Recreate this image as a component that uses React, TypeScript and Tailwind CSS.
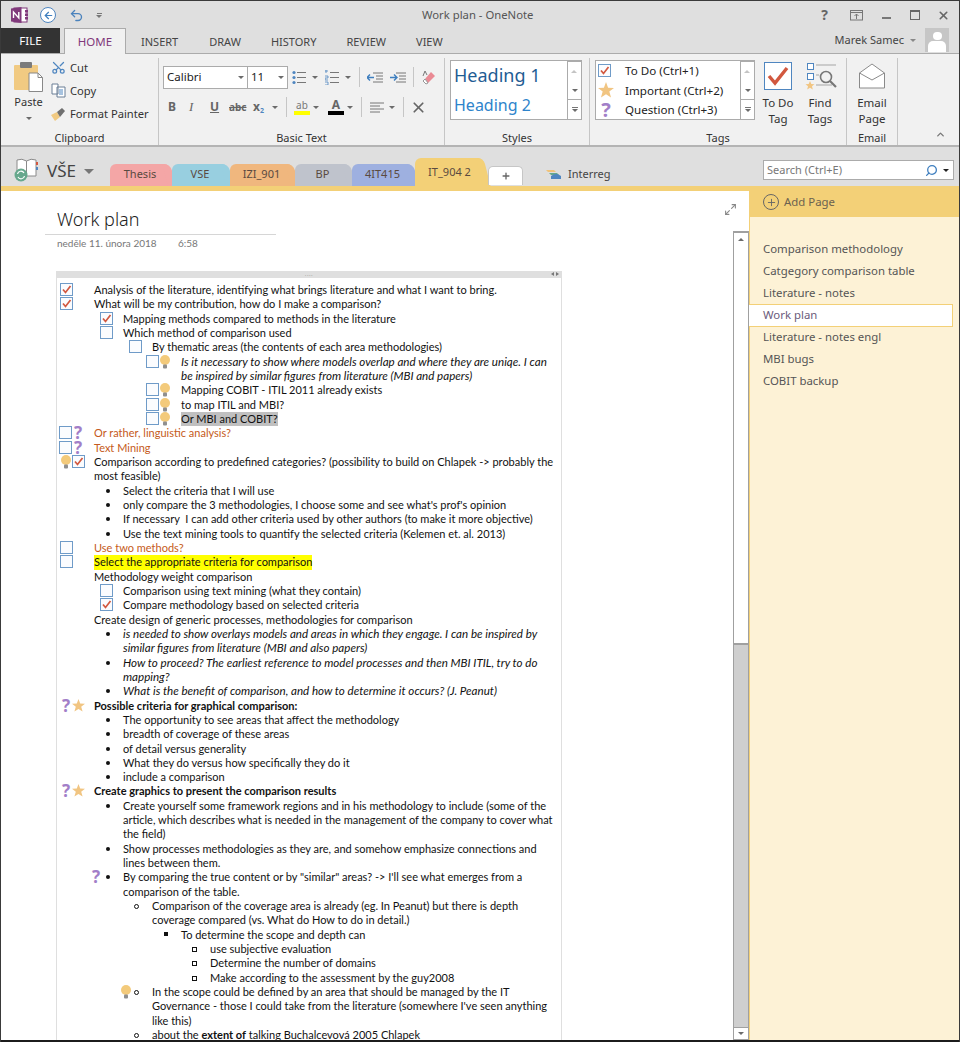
import React from "react";
import { Scissors, Undo2, ArrowLeft, Plus, Search, X, ChevronUp, Maximize2 } from "lucide-react";

const ui = "font-['Noto_Sans','Open_Sans',sans-serif]";
const cal = "font-['Lato','Noto_Sans',sans-serif]";

function Box({ on }: { on?: boolean }) {
  return (
    <svg width="13" height="13" viewBox="0 0 13 13" className="shrink-0">
      <rect x="0.5" y="0.5" width="12" height="12" fill="#fbfcfe" stroke="#6f9bc8" />
      {on && <path d="M3 6.5 L5.5 9.5 L10.5 3" fill="none" stroke="#d2583f" strokeWidth="1.7" />}
    </svg>
  );
}
function Bulb() {
  return (
    <svg width="10" height="14" viewBox="0 0 10 14" className="shrink-0">
      <circle cx="5" cy="5" r="5" fill="#f3ca7b" />
      <rect x="3" y="9.5" width="4" height="4" rx="1" fill="#8f8f8f" />
    </svg>
  );
}
function Q({ big }: { big?: boolean }) {
  return <span className={`shrink-0 w-[10px] h-[14px] text-center font-['Noto_Sans',sans-serif] font-bold ${big ? "text-[20px]" : "text-[17px]"} leading-[14px] text-[#a27fc8]`}>?</span>;
}
function Star({ s = 13, c = "#f1c582" }: { s?: number; c?: string }) {
  return (
    <svg width={s} height={s} viewBox="0 0 13 13" className="shrink-0">
      <path d="M6.5 0 L8.2 4.6 L13 4.8 L9.2 7.8 L10.6 12.6 L6.5 9.9 L2.4 12.6 L3.8 7.8 L0 4.8 L4.8 4.6 Z" fill={c} />
    </svg>
  );
}
const Dot = () => <span className="shrink-0 mt-[5px] size-[4px] rounded-full bg-[#111]" />;
const Ring = () => <span className="shrink-0 mt-[5px] size-[5px] rounded-full border border-[#111]" />;
const Sq = () => <span className="shrink-0 mt-[4px] size-[4px] bg-[#111]" />;
const Hollow = () => <span className="shrink-0 mt-[5px] size-[5px] border border-[#111]" />;

type RowP = { g: string; pad: string; icons?: React.ReactNode; children: React.ReactNode; cls?: string };
function Row({ g, pad, icons, children, cls = "" }: RowP) {
  return (
    <div className="flex items-start">
      <div className={`flex shrink-0 justify-end items-start gap-[1px] h-[14px] ${g} ${pad}`}>{icons}</div>
      <div className={`whitespace-pre ${cls}`}>{children}</div>
    </div>
  );
}
const L0 = "w-[36px]", L1 = "w-[65px]", L2 = "w-[94px]", L3 = "w-[123px]", L4 = "w-[152px]";
const orange = "text-[#c55a20]";
const ital = "italic text-[11.6px]";

function B1({ children, cls }: { children: React.ReactNode; cls?: string }) {
  return <Row g={L1} pad="pr-[13px]" icons={<Dot />} cls={cls}>{children}</Row>;
}

function Outline() {
  return (
    <div className={`${cal} text-[11px] leading-[14.33px] text-[#111] pt-[5px] pl-[1px]`}>
      <Row g={L0} pad="pr-[21px]" icons={<Box on />}>Analysis of the literature, identifying what brings literature and what I want to bring.</Row>
      <Row g={L0} pad="pr-[21px]" icons={<Box on />}>What will be my contribution, how do I make a comparison?</Row>
      <Row g={L1} pad="pr-[10px]" icons={<Box on />}>Mapping methods compared to methods in the literature</Row>
      <Row g={L1} pad="pr-[10px]" icons={<Box />}>Which method of comparison used</Row>
      <Row g={L2} pad="pr-[10px]" icons={<Box />}>By thematic areas (the contents of each area methodologies)</Row>
      <Row g={L3} pad="pr-[11px]" icons={<><Box /><Bulb /></>} cls={ital}>{"Is it necessary to show where models overlap and where they are uniqe. I can\nbe inspired by similar figures from literature (MBI and papers)"}</Row>
      <Row g={L3} pad="pr-[11px]" icons={<><Box /><Bulb /></>}>Mapping COBIT - ITIL 2011 already exists</Row>
      <Row g={L3} pad="pr-[11px]" icons={<><Box /><Bulb /></>}>to map ITIL and MBI?</Row>
      <Row g={L3} pad="pr-[11px]" icons={<><Box /><Bulb /></>}><span className="inline-block bg-[#c0c0c0]">Or MBI and COBIT?</span></Row>
      <Row g={L0} pad="pr-[11px]" icons={<><Box /><Q /></>} cls={orange}>Or rather, linguistic analysis?</Row>
      <Row g={L0} pad="pr-[11px]" icons={<><Box /><Q /></>} cls={orange}>Text Mining</Row>
      <Row g={L0} pad="pr-[9px]" icons={<><Bulb /><Box on /></>}>{"Comparison according to predefined categories? (possibility to build on Chlapek -> probably the\nmost feasible)"}</Row>
      <B1>Select the criteria that I will use</B1>
      <B1>only compare the 3 methodologies, I choose some and see what's prof's opinion</B1>
      <B1>If necessary  I can add other criteria used by other authors (to make it more objective)</B1>
      <B1>Use the text mining tools to quantify the selected criteria (Kelemen et. al. 2013)</B1>
      <Row g={L0} pad="pr-[21px]" icons={<Box />} cls={orange}>Use two methods?</Row>
      <Row g={L0} pad="pr-[21px]" icons={<Box />}><span className="inline-block bg-[#ffff00]">Select the appropriate criteria for comparison</span></Row>
      <Row g={L0} pad="">Methodology weight comparison</Row>
      <Row g={L1} pad="pr-[10px]" icons={<Box />}>Comparison using text mining (what they contain)</Row>
      <Row g={L1} pad="pr-[10px]" icons={<Box on />}>Compare methodology based on selected criteria</Row>
      <Row g={L0} pad="">Create design of generic processes, methodologies for comparison</Row>
      <B1 cls={ital}>{"is needed to show overlays models and areas in which they engage. I can be inspired by\nsimilar figures from literature (MBI and also papers)"}</B1>
      <B1 cls={ital}>{"How to proceed? The earliest reference to model processes and then MBI ITIL, try to do\nmapping?"}</B1>
      <B1 cls={ital}>What is the benefit of comparison, and how to determine it occurs? (J. Peanut)</B1>
      <Row g={L0} pad="pr-[9px]" icons={<><Q /><Star /></>} cls="font-bold">Possible criteria for graphical comparison:</Row>
      <B1>The opportunity to see areas that affect the methodology</B1>
      <B1>breadth of coverage of these areas</B1>
      <B1>of detail versus generality</B1>
      <B1>What they do versus how specifically they do it</B1>
      <B1>include a comparison</B1>
      <Row g={L0} pad="pr-[9px]" icons={<><Q /><Star /></>} cls="font-bold">Create graphics to present the comparison results</Row>
      <B1>{"Create yourself some framework regions and in his methodology to include (some of the\narticle, which describes what is needed in the management of the company to cover what\nthe field)"}</B1>
      <B1>{"Show processes methodologies as they are, and somehow emphasize connections and\nlines between them."}</B1>
      <Row g={L1} pad="pr-[13px]" icons={<span className="flex gap-[5px]"><Q /><Dot /></span>}>{"By comparing the true content or by \"similar\" areas? -> I'll see what emerges from a\ncomparison of the table."}</Row>
      <Row g={L2} pad="pr-[13px]" icons={<Ring />}>{"Comparison of the coverage area is already (eg. In Peanut) but there is depth\ncoverage compared (vs. What do How to do in detail.)"}</Row>
      <Row g={L3} pad="pr-[13px]" icons={<Sq />}>To determine the scope and depth can</Row>
      <Row g={L4} pad="pr-[13px]" icons={<Hollow />}>use subjective evaluation</Row>
      <Row g={L4} pad="pr-[13px]" icons={<Hollow />}>Determine the number of domains</Row>
      <Row g={L4} pad="pr-[13px]" icons={<Hollow />}>Make according to the assessment by the guy2008</Row>
      <Row g={L2} pad="pr-[13px]" icons={<span className="flex gap-[3px]"><Bulb /><Ring /></span>}>{"In the scope could be defined by an area that should be managed by the IT\nGovernance - those I could take from the literature (somewhere I've seen anything\nlike this)"}</Row>
      <Row g={L2} pad="pr-[13px]" icons={<Ring />}>about the <b>extent of</b> talking Buchalcevová 2005 Chlapek</Row>
    </div>
  );
}

function Caret({ c = "#6b6b6b" }: { c?: string }) {
  return <span className="inline-block size-0 border-x-[3px] border-t-[3px] border-x-transparent" style={{ borderTopColor: c }} />;
}

function NoteLogo() {
  return (
    <svg width="18" height="16" viewBox="0 0 18 16">
      <rect x="3" y="1" width="13" height="14" fill="#fff" stroke="#80397b" />
      <rect x="14" y="3" width="3" height="2.5" fill="#80397b" />
      <rect x="14" y="6.5" width="3" height="2.5" fill="#80397b" />
      <rect x="14" y="10" width="3" height="2.5" fill="#80397b" />
      <path d="M0 1.5 L10.5 0 V16 L0 14.5 Z" fill="#80397b" />
      <path d="M2.5 11 V5 L7.8 11 V5" stroke="#fff" strokeWidth="1.4" fill="none" />
    </svg>
  );
}

function TitleBar() {
  return (
    <div className="h-[27px] flex items-center shrink-0 pt-[1px]">
      <div className="ml-[10px]"><NoteLogo /></div>
      <div className="ml-[11px] size-[16px] rounded-full border border-[#4f86c0] bg-white flex items-center justify-center">
        <ArrowLeft size={11} strokeWidth={2.6} color="#3f7fbf" />
      </div>
      <Undo2 size={15} strokeWidth={2.2} color="#4b83bd" className="ml-[13px]" />
      <div className="ml-[12px] flex flex-col gap-[1px] items-center">
        <span className="w-[5px] h-[1px] bg-[#777]" />
        <Caret c="#777" />
      </div>
      <div className="ml-[320px] text-[11.3px] text-[#555] whitespace-pre">Work plan - OneNote</div>
      <div className="ml-auto flex items-center text-[#666] mr-[8px]">
        <span className="font-bold text-[14px] leading-none mr-[22px] text-[#666]">?</span>
        <svg width="14" height="11" viewBox="0 0 14 11" className="mr-[18px]"><rect x="0.5" y="0.5" width="12" height="9.5" fill="none" stroke="#777" /><path d="M0.5 2.5 H12.5 M6.5 9 V4 M4.5 6 L6.5 4 L8.5 6" stroke="#777" fill="none" /></svg>
        <span className="w-[9px] h-[2px] bg-[#777] mr-[19px] mt-[5px]" />
        <span className="w-[10px] h-[10px] border border-[#666] border-t-2 mr-[17px]" />
        <X size={13} strokeWidth={3} color="#666" className="mr-[1px]" />
      </div>
    </div>
  );
}

function TabsRow() {
  const t = "text-[11px] text-[#444] whitespace-nowrap";
  return (
    <div className="h-[26px] shrink-0 flex items-stretch border-b border-[#ababab]">
      <div className="w-[59px] h-[25px] pt-[1px] bg-[#333] text-white text-[11.5px] flex items-center justify-center">FILE</div>
      <div className="ml-[4px] w-[62px] h-[26px] pt-[1px] -mb-[1px] bg-[#f1f1f1] border border-b-0 border-[#ababab] text-[11.5px] text-[#80397b] flex items-center justify-center">HOME</div>
      <div className={`${t} ml-[15px] mt-[6px]`}>INSERT</div>
      <div className={`${t} ml-[31px] mt-[6px]`}>DRAW</div>
      <div className={`${t} ml-[30px] mt-[6px]`}>HISTORY</div>
      <div className={`${t} ml-[30px] mt-[6px]`}>REVIEW</div>
      <div className={`${t} ml-[30px] mt-[6px]`}>VIEW</div>
      <div className="ml-auto flex items-start mr-[10px]">
        <span className="text-[11px] text-[#444] mt-[4px] mr-[6px]">Marek Samec</span>
        <span className="mt-[11px] mr-[9px] flex"><Caret c="#888" /></span>
        <div className="w-[24px] h-[24px] bg-[#c6c6c6] overflow-hidden flex flex-col items-center pt-[4px]">
          <span className="size-[9px] rounded-full bg-white" />
          <span className="w-[18px] h-[12px] rounded-t-[5px] bg-white mt-[1px]" />
        </div>
      </div>
    </div>
  );
}

function Group({ w, label, children }: { w: string; label: string; children: React.ReactNode }) {
  return (
    <div className={`${w} h-[87px] shrink-0 flex flex-col border-r border-[#c6c6c6]`}>
      <div className="flex-1 min-h-0">{children}</div>
      <div className="h-[14px] text-[11px] leading-[14px] text-[#333] text-center">{label}</div>
    </div>
  );
}

function Small({ children }: { children: React.ReactNode }) {
  return <div className="text-[11.2px] leading-[23px] text-[#333] h-[23px] flex items-center gap-[4px] whitespace-nowrap">{children}</div>;
}
const Sep = () => <span className="w-[1px] h-[20px] bg-[#c6c6c6]" />;

function Ribbon() {
  return (
    <div className="h-[93px] shrink-0 bg-[#f1f1f1] border-b-2 border-[#b4b4b4] flex pt-[4px] pl-0 text-[#333]">
      <Group w="w-[158px]" label="Clipboard">
        <div className="flex pl-[13px] pt-[4px]">
          <div className="w-[29px] flex flex-col items-center">
            <svg width="29" height="30" viewBox="0 0 29 30">
              <rect x="0" y="3" width="24" height="25" rx="1" fill="#f1ca82" />
              <rect x="6" y="0" width="12" height="6" rx="1" fill="#7b7b7b" />
              <path d="M15 11 H24 L28.5 15.5 V29.5 H15 Z" fill="#fff" stroke="#888" />
              <path d="M24 11 V15.5 H28.5" fill="none" stroke="#888" />
            </svg>
            <span className="text-[11px] leading-[16px] mt-[2px]">Paste</span>
            <span className="mt-[7px] flex"><Caret /></span>
          </div>
          <div className="ml-[8px] -mt-[6px]">
            <Small><Scissors size={15} color="#4f86c0" className="-rotate-90" /> <span>Cut</span></Small>
            <Small>
              <svg width="15" height="15" viewBox="0 0 15 15"><path d="M1 1 H7 V11 H1 Z M6 4 H14 V14 H6 Z" fill="#fff" stroke="#6a7f96" /><path d="M8 7 H12 M8 9 H12 M8 11 H12" stroke="#4f86c0" /></svg>
              <span>Copy</span>
            </Small>
            <Small>
              <svg width="15" height="14" viewBox="0 0 15 14"><path d="M0 8 L6 5 L9 10 L4 14 Z" fill="#f1ca82" /><path d="M6 5 L11 1 L14 4 L9 10 Z" fill="#6f6f6f" /></svg>
              <span>Format Painter</span>
            </Small>
          </div>
        </div>
      </Group>
      <Group w="w-[286px]" label="Basic Text">
        <div className="pl-[4px] pt-[7px]">
          <div className="flex items-center h-[24px]">
            <div className="w-[85px] h-[23px] bg-white border border-[#ababab] flex items-center justify-between px-[3px] text-[11.5px] text-[#222]">Calibri<Caret /></div>
            <div className="w-[40px] h-[23px] bg-white border border-l-0 border-[#ababab] flex items-center justify-between px-[3px] text-[11.5px] text-[#222]">11<Caret /></div>
            <div className="ml-[4px] flex items-center">
              <svg width="15" height="15" viewBox="0 0 15 15"><circle cx="2" cy="2.5" r="1.6" fill="#4f86c0" /><circle cx="2" cy="7.5" r="1.6" fill="#4f86c0" /><circle cx="2" cy="12.5" r="1.6" fill="#4f86c0" /><path d="M5 2.5 H14 M5 7.5 H14 M5 12.5 H14" stroke="#777" /></svg>
              <span className="ml-[5px] flex"><Caret /></span>
              <svg width="15" height="15" viewBox="0 0 15 15" className="ml-[7px]"><path d="M0 1 H3 M1 0 V3 M0 6 H3 V8 H0 V10 H3 M0 12 H3 V15 H0" stroke="#4f86c0" fill="none" strokeWidth="0.8" /><path d="M5 2.5 H14 M5 7.5 H14 M5 12.5 H14" stroke="#777" /></svg>
              <span className="ml-[5px] mr-[8px] flex"><Caret /></span>
              <Sep />
              <svg width="16" height="11" viewBox="0 0 16 11" className="ml-[7px]"><path d="M6 1 H16 M9 4 H16 M9 7 H16 M6 10 H16" stroke="#777" /><path d="M0 5.5 H7 M3 2.5 L0 5.5 L3 8.5" stroke="#3f7fbf" strokeWidth="1.4" fill="none" /></svg>
              <svg width="16" height="11" viewBox="0 0 16 11" className="ml-[7px]"><path d="M6 1 H16 M9 4 H16 M9 7 H16 M6 10 H16" stroke="#777" /><path d="M0 5.5 H7 M4 2.5 L7 5.5 L4 8.5" stroke="#3f7fbf" strokeWidth="1.4" fill="none" /></svg>
              <span className="ml-[7px] flex"><Sep /></span>
              <svg width="15" height="15" viewBox="0 0 15 15" className="ml-[8px]"><path d="M6 13 L13 6 L9 2 L3 9 Z" fill="#ea8a94" /><path d="M3 9 L6 13 L4 14 L1 11 Z" fill="#fff" stroke="#999" /><path d="M3 1 L1 6 M3 1 L5 5" stroke="#777" fill="none" /></svg>
            </div>
          </div>
          <div className="flex items-center h-[26px] mt-[5px] pl-[5px] text-[#666]">
            <span className="font-bold text-[12px] w-[21px]">B</span>
            <span className="italic text-[13px] w-[21px] font-['Liberation_Serif',serif]">I</span>
            <span className="underline text-[12px] font-bold w-[19px]">U</span>
            <span className="line-through text-[10px] font-bold w-[24px]">abc</span>
            <span className="font-bold text-[12px] w-[19px] whitespace-nowrap">x<sub className="text-[7px] text-[#4f86c0]">2</sub></span>
            <span className="flex mr-[8px]"><Caret /></span>
            <Sep />
            <div className="ml-[7px] w-[16px] flex flex-col items-center">
              <span className="text-[10px] leading-[10px] text-[#777]">ab</span>
              <span className="w-[16px] h-[4px] bg-[#ffff00] mt-[1px]" />
            </div>
            <span className="ml-[3px] mr-[9px] flex"><Caret /></span>
            <div className="w-[16px] flex flex-col items-center">
              <span className="text-[12px] leading-[10px] font-bold text-[#666]">A</span>
              <span className="w-[16px] h-[4px] bg-black mt-[1px]" />
            </div>
            <span className="ml-[3px] mr-[8px] flex"><Caret /></span>
            <Sep />
            <svg width="14" height="11" viewBox="0 0 14 11" className="ml-[8px]"><path d="M0 1 H14 M0 4 H10 M0 7 H14 M0 10 H10" stroke="#777" /></svg>
            <span className="ml-[5px] mr-[8px] flex"><Caret /></span>
            <Sep />
            <X size={17} strokeWidth={2.4} color="#666" className="ml-[6px]" />
          </div>
        </div>
      </Group>
      <Group w="w-[145px]" label="Styles">
        <div className="ml-[5px] mt-[2px] w-[132px] h-[60px] bg-white border border-[#ababab] flex">
          <div className="flex-1 pl-[3px] whitespace-nowrap">
            <div className="text-[18px] leading-[28px] text-[#1f5d94]">Heading 1</div>
            <div className="text-[16px] leading-[28px] mt-[2px] text-[#2e84cb]">Heading 2</div>
          </div>
          <div className="w-[14px] border-l border-[#ababab] flex flex-col text-[#777]">
            <div className="h-[20px] flex items-center justify-center border-b border-[#ababab] rotate-180"><Caret c="#c4c4c4" /></div>
            <div className="h-[19px] flex items-center justify-center border-b border-[#ababab]"><Caret /></div>
            <div className="flex-1 flex flex-col gap-[1px] items-center justify-center"><span className="w-[6px] h-[1px] bg-[#777]" /><Caret /></div>
          </div>
        </div>
      </Group>
      <Group w="w-[257px]" label="Tags">
        <div className="flex ml-[5px] mt-[2px]">
          <div className="w-[160px] h-[60px] bg-white border border-[#ababab] flex">
            <div className="flex-1 text-[11.6px] leading-[19px] text-[#222] whitespace-nowrap">
              <div className="flex items-center h-[19px] pl-[2px]"><span className="w-[27px] flex"><Box on /></span>To Do (Ctrl+1)</div>
              <div className="flex items-center h-[20px] pl-[2px]"><span className="w-[27px] flex"><Star s={16} /></span>Important (Ctrl+2)</div>
              <div className="flex items-center h-[19px] pl-[2px]"><span className="w-[27px] flex pl-[3px]"><Q big /></span>Question (Ctrl+3)</div>
            </div>
            <div className="w-[14px] border-l border-[#ababab] flex flex-col">
              <div className="h-[20px] flex items-center justify-center border-b border-[#ababab] rotate-180"><Caret c="#c4c4c4" /></div>
              <div className="h-[19px] flex items-center justify-center border-b border-[#ababab]"><Caret /></div>
              <div className="flex-1 flex flex-col gap-[1px] items-center justify-center"><span className="w-[6px] h-[1px] bg-[#777]" /><Caret /></div>
            </div>
          </div>
          <div className="w-[42px] ml-[2px] pt-[2px] flex flex-col items-center text-[11.5px] leading-[16px]">
            <svg width="28" height="28" viewBox="0 0 28 28"><rect x="0.5" y="0.5" width="27" height="27" fill="#fff" stroke="#4f86c0" /><path d="M5 14 L11 21 L23 6" fill="none" stroke="#d2583f" strokeWidth="3.4" /></svg>
            <span className="text-center mt-[5px]">To Do<br />Tag</span>
          </div>
          <div className="w-[42px] pt-[2px] flex flex-col items-center text-[11.5px] leading-[16px]">
            <svg width="32" height="28" viewBox="0 0 32 28" className="ml-[1px]"><rect x="2.5" y="1.5" width="6" height="6" fill="#fff" stroke="#4f86c0" /><rect x="2.5" y="11.5" width="6" height="6" fill="#fff" stroke="#4f86c0" /><path d="M11 3 H31 M11 13 H14 M11 23 H27" stroke="#a5a5a5" /><path d="M5 19 L6.3 22 L9.5 22.2 L7 24.2 L7.8 27.5 L5 25.7 L2.2 27.5 L3 24.2 L0.5 22.2 L3.7 22 Z" fill="#f1c582" /><circle cx="21" cy="15" r="5.5" fill="none" stroke="#777" strokeWidth="1.6" /><path d="M25 19 L31 25" stroke="#777" strokeWidth="2.2" /></svg>
            <span className="text-center mt-[5px]">Find<br />Tags</span>
          </div>
        </div>
      </Group>
      <Group w="w-[51px]" label="Email">
        <div className="flex flex-col items-center mt-[5px] text-[11.5px] leading-[16px]">
          <svg width="26" height="26" viewBox="0 0 26 26"><path d="M0.5 10 L13 1 L25.5 10 V25 H0.5 Z" fill="#fff" stroke="#8a8a8a" /><path d="M0.5 10 L13 17 L25.5 10" fill="none" stroke="#8a8a8a" /></svg>
          <span className="text-center mt-[6px]">Email<br />Page</span>
        </div>
      </Group>
      <div className="flex-1 flex justify-end items-end pr-[13px] pb-[5px]"><ChevronUp size={11} strokeWidth={3} color="#777" /></div>
    </div>
  );
}

function NbTab({ label, bg, cls = "" }: { label: string; bg: string; cls?: string }) {
  return (
    <div className={`relative rounded-tl-[6px] rounded-tr-[6px] ${bg} text-[11px] text-[#5a4a40] flex items-center justify-center mr-[2px] after:absolute after:top-0 after:-right-[3px] after:bottom-0 after:w-[8px] after:bg-inherit after:rounded-tr-[6px] after:skew-x-[14deg] ${cls}`}>
      <span className="relative z-10">{label}</span>
    </div>
  );
}

function NotebookBar() {
  return (
    <div className="h-[39px] shrink-0 bg-[#dfdfdf] flex items-end relative">
      <div className="absolute right-[5px] top-[13px] w-[191px] h-[20px] bg-white border border-[#ababab] flex items-center pl-[3px] pr-[4px] text-[11px] text-[#777]">
        <span className="flex-1">Search (Ctrl+E)</span>
        <Search size={13} strokeWidth={2.4} color="#3f7fbf" className="-scale-x-100" />
        <span className="ml-[5px] flex"><Caret c="#222" /></span>
      </div>
      <div className="self-end flex items-center h-[30px] ml-[13px] mb-[1px]">
        <svg width="26" height="24" viewBox="0 0 26 24">
          <path d="M3 2 Q8 0 12.5 3 Q17 0 22 2 V18 H3 Z" fill="#fff" stroke="#8a8a8a" />
          <path d="M12.5 3 V18" stroke="#8a8a8a" />
          <rect x="22" y="4" width="2" height="3" fill="#d2583f" /><rect x="22" y="9" width="2" height="3" fill="#4f86c0" />
          <circle cx="7" cy="17" r="6.5" fill="#66a88d" />
          <path d="M3.5 16 A3.5 3.5 0 0 1 10 15 M10.5 18 A3.5 3.5 0 0 1 4 19" stroke="#fff" fill="none" strokeWidth="1.2" />
        </svg>
      </div>
      <div className="self-end h-[30px] flex items-center ml-[7px] w-[63px] text-[17px] text-[#444]">VŠE<span className="ml-[8px] size-0 border-x-[5px] border-t-[5px] border-x-transparent border-t-[#777]" /></div>
      <NbTab label="Thesis" bg="bg-[#f4a6a6]" cls="w-[60px] h-[22px] pb-[2px]" />
      <NbTab label="VSE" bg="bg-[#98cfe0]" cls="w-[56px] h-[22px] pb-[2px]" />
      <NbTab label="IZI_901" bg="bg-[#f0b77e]" cls="w-[63px] h-[22px] pb-[2px]" />
      <NbTab label="BP" bg="bg-[#bfc3cc]" cls="w-[55px] h-[22px] pb-[2px]" />
      <NbTab label="4IT415" bg="bg-[#9eb0e0]" cls="w-[61px] h-[22px] pb-[2px]" />
      <NbTab label="IT_904 2" bg="bg-[#f3d077]" cls="w-[69px] h-[28px] pt-[1px]" />
      <div className="relative ml-[2px] w-[35px] h-[19px] mb-[1px] bg-white rounded-t-[5px] border border-b-0 border-[#c6c6c6] flex items-center justify-center"><Plus size={10} strokeWidth={3.2} color="#666" /></div>
      <div className="self-end ml-[23px] h-[24px] flex items-center text-[11px] text-[#444]">
        <svg width="16" height="10" viewBox="0 0 16 10" className="mr-[6px]"><path d="M0 1 H8 L10 3 H2 Z" fill="#f0c27a" /><path d="M3 4 H11 L13 6 H5 Z" fill="#66a88d" /><path d="M5 7 Q10 3 15 7 V10 H5 Z" fill="#4f86c0" /></svg>
        Interreg
      </div>
    </div>
  );
}

function Scrollbar() {
  return (
    <div className="absolute left-[733px] top-[40px] bottom-[0px] w-[16px] flex flex-col border border-[#a0a0a0] bg-[#cfcfcf]">
      <div className="h-[14px] bg-white border-b border-[#a0a0a0] flex items-center justify-center rotate-180"><Caret /></div>
      <div className="h-[399px] bg-white border-b-2 border-[#a0a0a0]" />
      <div className="flex-1" />
      <div className="h-[12px] bg-white border-t border-[#a0a0a0] flex items-center justify-center"><Caret /></div>
    </div>
  );
}

function PageArea() {
  return (
    <div className="w-[749px] shrink-0 bg-white relative overflow-hidden">
      <div className={`${cal} pt-[16px] pl-[57px]`}>
        <div className={`${ui} font-light text-[18px] leading-[24px] text-[#222]`}>Work plan</div>
        <div className="-ml-[12px] mt-[3px] w-[231px] h-[1px] bg-[#d6d6d6]" />
        <div className={`${cal} flex text-[10px] leading-[14px] text-[#777] mt-[1px]`}>
          <span className="w-[121px]">neděle 11. února 2018</span>
          <span>6:58</span>
        </div>
      </div>
      <Maximize2 size={13} strokeWidth={2} color="#888" className="absolute left-[724px] top-[12px]" />
      <div className="ml-[56px] mt-[21px] w-[506px] border-x border-[#dfdfdf]">
        <div className="h-[7px] -mx-[1px] bg-[#dfdfdf] relative flex items-center justify-center">
          <span className="text-[6px] leading-[6px] tracking-[0.5px] text-[#777]">····</span>
          <span className="absolute right-[3px] top-[1px] flex gap-[2px]">
            <span className="size-0 border-y-[2.5px] border-r-[3px] border-y-transparent border-r-[#777]" />
            <span className="size-0 border-y-[2.5px] border-l-[3px] border-y-transparent border-l-[#777]" />
          </span>
        </div>
        <Outline />
      </div>
      <Scrollbar />
    </div>
  );
}

function PageList() {
  const items = ["Comparison methodology", "Catgegory comparison table", "Literature - notes", "Work plan", "Literature - notes engl", "MBI bugs", "COBIT backup"];
  return (
    <div className="flex-1 bg-[#fdf2d6] border-l border-[#f3d077] text-[11.4px] text-[#555]">
      <div className="h-[26px] -ml-[1px] bg-[#f3d077] flex items-center pl-[14px] pb-[4px] text-[#6b6250]">
        <span className="size-[16px] rounded-full border border-[#666] flex items-center justify-center mr-[5px]"><Plus size={11} strokeWidth={2} color="#666" /></span>
        Add Page
      </div>
      <div className="pt-[21px]">
        {items.map((p) => (
          <div key={p} className={p === "Work plan" ? "h-[23px] -my-[0.5px] -ml-[1px] mr-[7px] pl-[14px] flex items-center bg-white border border-l-0 border-[#f3d077] text-[#6b5b7b]" : "h-[22px] pl-[13px] flex items-center"}>{p}</div>
        ))}
      </div>
    </div>
  );
}

export default function App() {
  return (
    <div className={`${ui} w-[960px] h-[1042px] overflow-hidden bg-[#dfdfdf] flex flex-col border-x border-t border-[#3a3a3a] box-border`}>
      <TitleBar />
      <TabsRow />
      <Ribbon />
      <NotebookBar />
      <div className="h-[5px] shrink-0 bg-[#f3d077]" />
      <div className="flex-1 flex min-h-0 -ml-[1px] -mr-[1px]">
        <PageArea />
        <PageList />
      </div>
      <div className="h-[2px] shrink-0 bg-[#1c1c1c]" />
    </div>
  );
}
